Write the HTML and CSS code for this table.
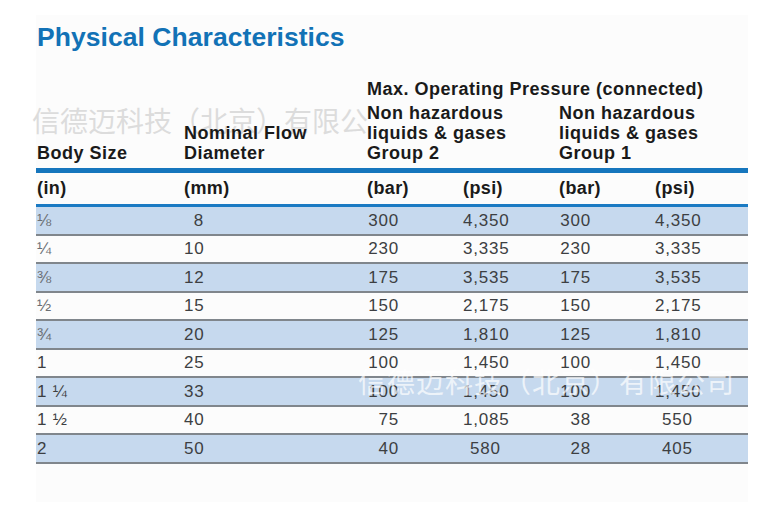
FILE: index.html
```html
<!DOCTYPE html>
<html>
<head>
<meta charset="utf-8">
<link rel="stylesheet" href="styles.css">
</head>
<body>
<div class="page">
  <h1 class="title">Physical Characteristics</h1>
  <div class="table">
    <div class="head-top">
      <div class="span4 hd">Max. Operating Pressure (connected)</div>
    </div>
    <div class="head-main">
      <div class="hd">Body Size</div>
      <div class="hd">Nominal Flow<br>Diameter</div>
      <div class="hd span2">Non hazardous<br>liquids &amp; gases<br>Group 2</div>
      <div class="hd span2">Non hazardous<br>liquids &amp; gases<br>Group 1</div>
    </div>
    <div class="units">
      <div>(in)</div><div>(mm)</div><div>(bar)</div><div>(psi)</div><div>(bar)</div><div>(psi)</div>
    </div>
    <div class="row alt"><div class="frac">⅛</div><div><span class="n2">8</span></div><div><span class="n3">300</span></div><div><span class="n5">4,350</span></div><div><span class="n3">300</span></div><div><span class="n5">4,350</span></div></div>
    <div class="row"><div class="frac">¼</div><div><span class="n2">10</span></div><div><span class="n3">230</span></div><div><span class="n5">3,335</span></div><div><span class="n3">230</span></div><div><span class="n5">3,335</span></div></div>
    <div class="row alt"><div class="frac">⅜</div><div><span class="n2">12</span></div><div><span class="n3">175</span></div><div><span class="n5">3,535</span></div><div><span class="n3">175</span></div><div><span class="n5">3,535</span></div></div>
    <div class="row"><div class="frac">½</div><div><span class="n2">15</span></div><div><span class="n3">150</span></div><div><span class="n5">2,175</span></div><div><span class="n3">150</span></div><div><span class="n5">2,175</span></div></div>
    <div class="row alt"><div class="frac">¾</div><div><span class="n2">20</span></div><div><span class="n3">125</span></div><div><span class="n5">1,810</span></div><div><span class="n3">125</span></div><div><span class="n5">1,810</span></div></div>
    <div class="row"><div>1</div><div><span class="n2">25</span></div><div><span class="n3">100</span></div><div><span class="n5">1,450</span></div><div><span class="n3">100</span></div><div><span class="n5">1,450</span></div></div>
    <div class="row alt"><div>1 ¼</div><div><span class="n2">33</span></div><div><span class="n3">100</span></div><div><span class="n5">1,450</span></div><div><span class="n3">100</span></div><div><span class="n5">1,450</span></div></div>
    <div class="row"><div>1 ½</div><div><span class="n2">40</span></div><div><span class="n3">75</span></div><div><span class="n5">1,085</span></div><div><span class="n3">38</span></div><div><span class="n5">550</span></div></div>
    <div class="row alt"><div>2</div><div><span class="n2">50</span></div><div><span class="n3">40</span></div><div><span class="n5">580</span></div><div><span class="n3">28</span></div><div><span class="n5">405</span></div></div>
  </div>
  <div class="wm wm1">信德迈科技（北京）有限公</div>
  <div class="wm wm2">信德迈科技（北京）有限公司</div>
</div>
</body>
</html>
```
FILE: styles.css
```css
html, body {
  margin: 0;
  padding: 0;
  background: #ffffff;
}
body {
  width: 764px;
  height: 521px;
  overflow: hidden;
  font-family: "Liberation Sans", Arial, "Noto Sans CJK SC", sans-serif;
}
.page {
  position: relative;
  margin: 15px 16px 0 36px;
  height: 486px;
  background: #fcfcfc;
  padding-top: 1px;
}
.title {
  margin: 6px 0 0 1px;
  font-size: 26.5px;
  line-height: 30px;
  font-weight: bold;
  color: #1272b6;
  letter-spacing: 0.05px;
}
.table {
  margin-top: 27px;
  width: 712px;
  position: relative;
  z-index: 1;
}
.head-top, .head-main, .units, .row {
  display: grid;
  grid-template-columns: 148px 183px 96px 96px 96px 93px;
}
.hd {
  font-weight: bold;
  font-size: 18px;
  line-height: 20px;
  color: #1a1a1a;
  letter-spacing: 0.5px;
}
.head-top .span4 {
  grid-column: 3 / span 4;
}
.head-top {
  height: 20px;
  margin-bottom: 4px;
}
.head-main {
  align-items: end;
  padding-bottom: 5px;
  border-bottom: 5px solid #1676bd;
}
.head-main > div:first-child,
.units > div:first-child,
.row > div:first-child {
  padding-left: 1px;
}
.span2 {
  grid-column: span 2;
}
.units {
  height: 31px;
  align-items: center;
  border-bottom: 3px solid #1a7ac3;
  font-weight: bold;
  font-size: 18px;
  color: #1a1a1a;
  letter-spacing: 0.4px;
}
.row {
  box-sizing: border-box;
  height: 28.5px;
  align-items: center;
  border-bottom: 2px solid #80868c;
  font-size: 17px;
  color: #3d3f42;
  padding-top: 1px;
  letter-spacing: 0.8px;
}
.row.alt {
  background: #c6d9ee;
}
.frac {
  color: #6b6f74;
}
.n2 {
  display: inline-block;
  width: 20px;
  text-align: right;
}
.n3 {
  display: inline-block;
  width: 32px;
  text-align: right;
}
.n5 {
  display: inline-block;
  width: 45px;
  text-align: center;
}
.wm {
  position: absolute;
  font-family: "Noto Sans CJK SC", sans-serif;
  font-size: 28px;
  line-height: 30px;
  white-space: nowrap;
}
.wm1 {
  left: -4px;
  top: 90px;
  color: #dcdcdc;
  z-index: 0;
}
.wm2 {
  left: 322px;
  top: 351px;
  color: rgba(255, 255, 255, 0.7);
  z-index: 2;
  letter-spacing: 1px;
}
```
